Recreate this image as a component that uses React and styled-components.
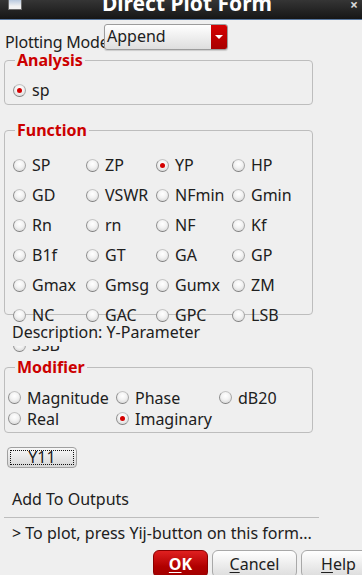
import React from 'react'
import styled, { createGlobalStyle } from 'styled-components'

const Global = createGlobalStyle`
  html, body {
    margin: 0;
    padding: 0;
    background: #efefef;
  }
  body {
    font-family: "Noto Sans", "Open Sans", sans-serif;
    font-size: 16px;
    color: #202020;
  }
`

const Window = styled.div`
  width: 362px;
  height: 575px;
  overflow: hidden;
  background: #efefef;
`

const TitleBar = styled.div`
  height: 19px;
  border-bottom: 1px solid #57779f;
  background: linear-gradient(#353535, #161616);
  display: flex;
  overflow: hidden;
`

const WinIcon = styled.div`
  width: 12px;
  height: 9px;
  margin: 0 0 0 8px;
  border: 1px solid #6a6a6a;
  border-top: 0;
  background: linear-gradient(#b9c9de, #f2f2f2 70%);
  flex: none;
`

const Title = styled.div`
  flex: 1;
  text-align: center;
  font-weight: bold;
  font-size: 21px;
  line-height: 21px;
  margin-top: -7px;
  padding-left: 2px;
  color: #fff;
  white-space: nowrap;
`

const Close = styled.div`
  flex: none;
  width: 10px;
  margin: 0 2px 0 0;
  color: #d8d8d8;
  font-size: 14px;
  font-weight: bold;
  line-height: 10px;
`

const ModeRow = styled.div`
  display: flex;
  align-items: flex-start;
  margin-top: 4px;
  padding-left: 5px;
`

const ModeLabel = styled.div`
  width: 99px;
  white-space: nowrap;
  line-height: 20px;
  margin-top: 8px;
  letter-spacing: -0.2px;
`

const Select = styled.div`
  width: 124px;
  height: 26px;
  box-sizing: border-box;
  border: 1px solid #9c9c9c;
  border-radius: 3px;
  background: linear-gradient(#ffffff, #dedede);
  display: flex;
  box-shadow: 0 1px 1px rgba(0, 0, 0, 0.15);
  overflow: hidden;
`

const SelectText = styled.div`
  flex: 1;
  padding-left: 2px;
  line-height: 22px;
`

const SelectArrow = styled.div`
  width: 16px;
  background: linear-gradient(#d60000, #a80000);
  display: flex;
  align-items: center;
  justify-content: center;

  &::after {
    content: '';
    border-left: 4px solid transparent;
    border-right: 4px solid transparent;
    border-top: 4px solid #fff;
  }
`

const Group = styled.div`
  margin: ${p => p.$top}px 0 0 4px;
  width: 309px;
  box-sizing: border-box;
  border: 1px solid #bdbdbd;
  border-radius: 4px;
  height: ${p => (p.$height ? `${p.$height}px` : 'auto')};
  padding-bottom: ${p => p.$pb || 0}px;
`

const Legend = styled.div`
  display: table;
  margin: -9px 0 0 10px;
  padding: 0 2px;
  background: #efefef;
  color: #cc0000;
  font-weight: bold;
  line-height: 16px;
`

const AnalysisRow = styled.div`
  display: flex;
  align-items: center;
  height: 22px;
  margin-top: 11px;
  padding-left: 8px;
`

const FuncGrid = styled.div`
  display: grid;
  grid-template-columns: 73px 70px 76px 1fr;
  grid-auto-rows: 30px;
  margin-top: 12px;
  padding-left: 8px;
`

const ModGrid = styled.div`
  display: grid;
  grid-template-columns: 108px 103px 1fr;
  grid-auto-rows: 21px;
  margin-top: 12px;
  padding-left: 3px;
`

const Option = styled.label`
  display: flex;
  align-items: center;
  white-space: nowrap;
  line-height: 20px;
  gap: 6px;
`

const Radio = styled.span`
  flex: none;
  width: 13px;
  height: 13px;
  box-sizing: border-box;
  border-radius: 50%;
  border: 1px solid;
  border-color: #c4c4c4 #a6a6a6 #7e7e7e #8e8e8e;
  background: radial-gradient(circle at 50% 35%, #ffffff 0%, #f2f2f2 45%, #cfcfcf 100%);
  display: flex;
  align-items: center;
  justify-content: center;

  &::after {
    content: '';
    width: 5px;
    height: 5px;
    border-radius: 50%;
    background: ${p => (p.$on ? '#d40000' : 'transparent')};
  }
`

const Description = styled.div`
  position: relative;
  z-index: 1;
  margin-top: 8px;
  height: 23px;
  line-height: 19px;
  padding-left: 12px;
  background: #efefef;
`

const Y11Button = styled.div`
  margin: 14px 0 0 7px;
  width: 70px;
  height: 21px;
  box-sizing: border-box;
  border: 1px solid #a0a0a0;
  border-radius: 4px;
  background: linear-gradient(#f8f8f8, #d6d6d6);
  padding: 2px;
`

const FocusRect = styled.div`
  height: 100%;
  box-sizing: border-box;
  border: 1px dotted #111;
  display: flex;
  align-items: center;
  justify-content: center;
  line-height: 15px;
`

const TextLine = styled.div`
  margin-top: ${p => p.$top}px;
  padding-left: 12px;
  line-height: 20px;
  white-space: nowrap;
`

const Separator = styled.div`
  margin: 8px 0 0 4px;
  width: 315px;
  height: 1px;
  background: #bdbdbd;
`

const ButtonRow = styled.div`
  display: flex;
  gap: 4px;
  margin-top: 7px;
  padding-left: 153px;
`

const Button = styled.div`
  flex: none;
  width: ${p => p.$w}px;
  height: 28px;
  box-sizing: border-box;
  border-radius: 6px;
  border: 1px solid ${p => (p.$primary ? '#8a0000' : '#a8a8a8')};
  background: ${p =>
    p.$primary
      ? 'linear-gradient(#e02020, #b00000 60%, #a00000)'
      : 'linear-gradient(#ffffff, #dcdcdc)'};
  color: ${p => (p.$primary ? '#fff' : '#202020')};
  font-weight: ${p => (p.$primary ? 'bold' : 'normal')};
  display: flex;
  align-items: center;
  justify-content: center;
  line-height: 24px;

  u {
    text-decoration-thickness: 1px;
    text-underline-offset: 2px;
  }
`

const functions = [
  ['SP', 'ZP', 'YP', 'HP'],
  ['GD', 'VSWR', 'NFmin', 'Gmin'],
  ['Rn', 'rn', 'NF', 'Kf'],
  ['B1f', 'GT', 'GA', 'GP'],
  ['Gmax', 'Gmsg', 'Gumx', 'ZM'],
  ['NC', 'GAC', 'GPC', 'LSB'],
  ['SSB'],
]

const modifiers = [
  ['Magnitude', 'Phase', 'dB20'],
  ['Real', 'Imaginary'],
]

export default function App() {
  return (
    <Window>
      <Global />
      <TitleBar>
        <WinIcon />
        <Title>Direct Plot Form</Title>
        <Close>×</Close>
      </TitleBar>

      <ModeRow>
        <ModeLabel>Plotting Mode</ModeLabel>
        <Select>
          <SelectText>Append</SelectText>
          <SelectArrow />
        </Select>
      </ModeRow>

      <Group $top={8} $pb={3}>
        <Legend>Analysis</Legend>
        <AnalysisRow>
          <Option>
            <Radio $on />
            sp
          </Option>
        </AnalysisRow>
      </Group>

      <Group $top={25} $height={185}>
        <Legend>Function</Legend>
        <FuncGrid>
          {functions.flat().map(name => (
            <Option key={name}>
              <Radio $on={name === 'YP'} />
              {name}
            </Option>
          ))}
        </FuncGrid>
      </Group>

      <Description>Description: Y-Parameter</Description>

      <Group $top={21} $pb={3}>
        <Legend>Modifier</Legend>
        <ModGrid>
          {modifiers.map(row =>
            row.map(name => (
              <Option key={name}>
                <Radio $on={name === 'Imaginary'} />
                {name}
              </Option>
            ))
          )}
        </ModGrid>
      </Group>

      <Y11Button>
        <FocusRect>Y11</FocusRect>
      </Y11Button>

      <TextLine $top={21}>Add To Outputs</TextLine>
      <Separator />
      <TextLine $top={5}>&gt; To plot, press Yij-button on this form...</TextLine>

      <ButtonRow>
        <Button $primary $w={55}>
          <span><u>O</u>K</span>
        </Button>
        <Button $w={85}>
          <span><u>C</u>ancel</span>
        </Button>
        <Button $w={75}>
          <span><u>H</u>elp</span>
        </Button>
      </ButtonRow>
    </Window>
  )
}
